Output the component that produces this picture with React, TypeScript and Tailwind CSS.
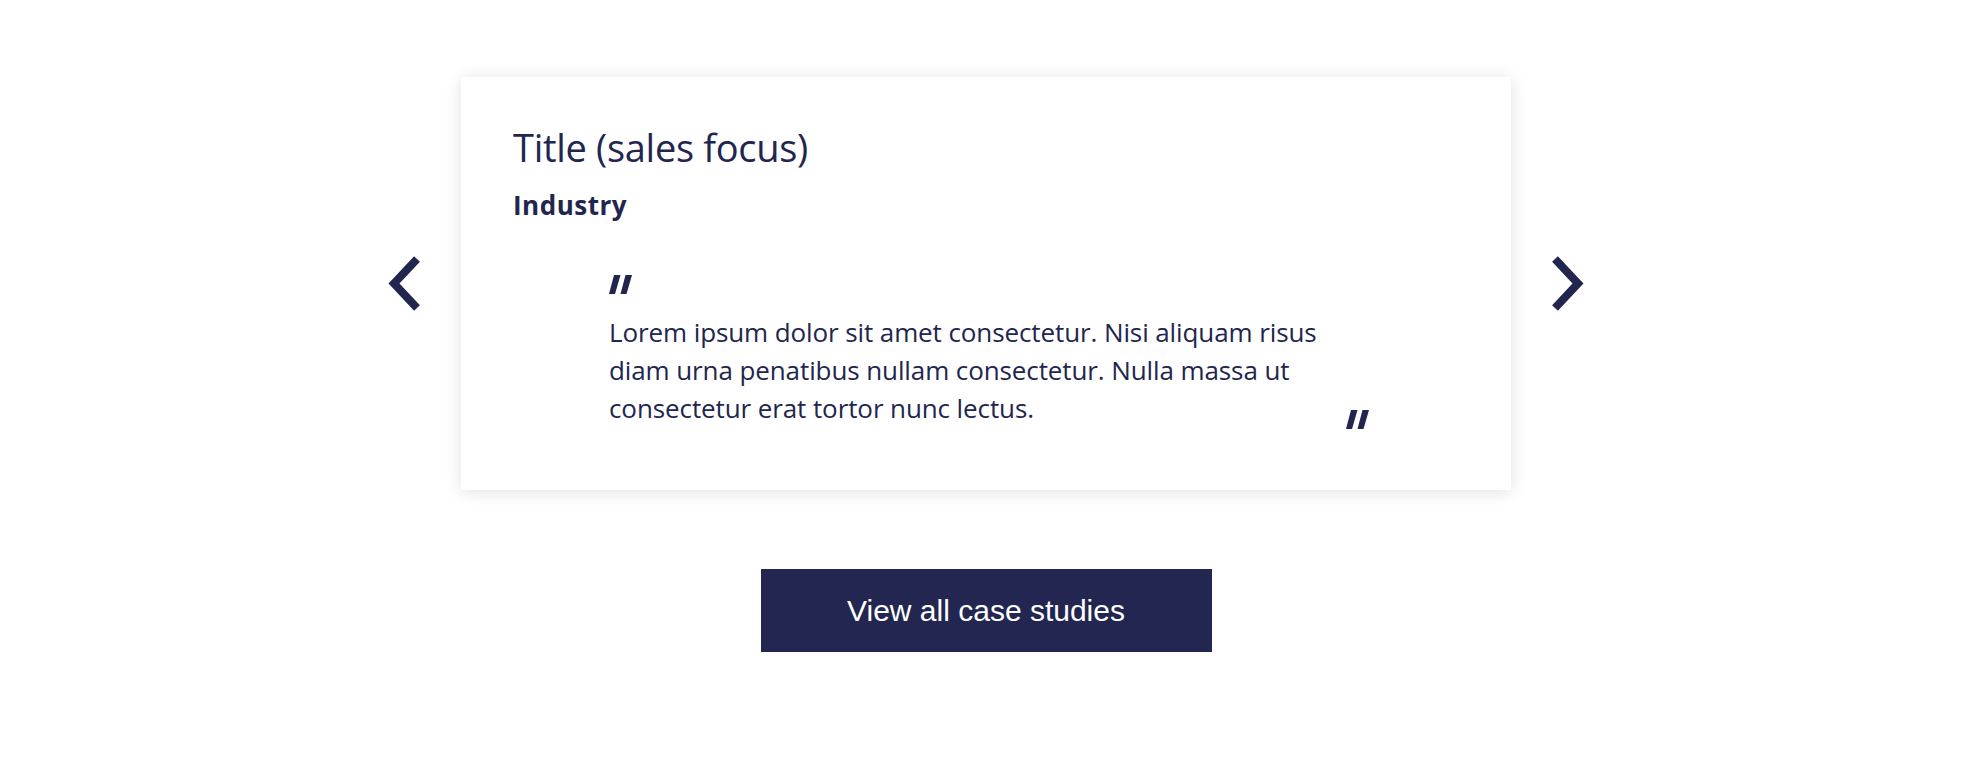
import React from "react";

const navy = "text-[#22264f]";

function Chevron({ dir }: { dir: "left" | "right" }) {
  const d = dir === "left" ? "M30 3 L7 27.5 L30 52" : "M4 3 L27 27.5 L4 52";
  return (
    <button
      aria-label={dir === "left" ? "Previous" : "Next"}
      className="shrink-0 w-[34px] h-[55px] flex items-center justify-center"
    >
      <svg width="34" height="55" viewBox="0 0 34 55" fill="none">
        <path d={d} stroke="#22264f" strokeWidth="8" strokeLinecap="butt" strokeLinejoin="miter" />
      </svg>
    </button>
  );
}

// Slanted double-bar quotation mark
function QuoteMark({ className }: { className?: string }) {
  return (
    <svg width="23" height="19" viewBox="0 0 23 19" className={className}>
      <polygon points="5,0 11.5,0 6,19 0,19" fill="#22264f" />
      <polygon points="16.5,0 23,0 17.5,19 11.5,19" fill="#22264f" />
    </svg>
  );
}

export default function App() {
  return (
    <div className="w-[1972px] bg-white min-h-[770px] font-['Open_Sans','Noto_Sans',sans-serif]">
      <div className="pt-[77px] flex flex-col items-center">
        <div className="flex items-center gap-[40px]">
          <Chevron dir="left" />
          <div className="w-[1050px] h-[413px] bg-white shadow-[0_2px_16px_rgba(0,0,0,0.12)] px-[52px] pt-[47px]">
            <h2 className={`text-[38px] leading-[46px] font-normal tracking-[-0.3px] ${navy}`}>Title (sales focus)</h2>
            <p className={`mt-[19px] text-[26px] leading-[32px] font-bold tracking-[0.5px] ${navy}`}>Industry</p>
            <div className="ml-[96px] mt-[54px] w-[760px] relative">
              <QuoteMark className="block" />
              <p className={`mt-[19px] text-[26px] leading-[38px] tracking-[-0.1px] whitespace-nowrap ${navy}`}>
                Lorem ipsum dolor sit amet consectetur. Nisi aliquam risus
                <br />
                diam urna penatibus nullam consectetur. Nulla massa ut
                <br />
                consectetur erat tortor nunc lectus.
              </p>
              <QuoteMark className="absolute right-0 bottom-[-2px]" />
            </div>
          </div>
          <Chevron dir="right" />
        </div>
        <button className="mt-[79px] w-[451px] h-[83px] bg-[#222650] text-white font-['Liberation_Sans',Arial,sans-serif] text-[30px]">
          View all case studies
        </button>
      </div>
    </div>
  );
}
